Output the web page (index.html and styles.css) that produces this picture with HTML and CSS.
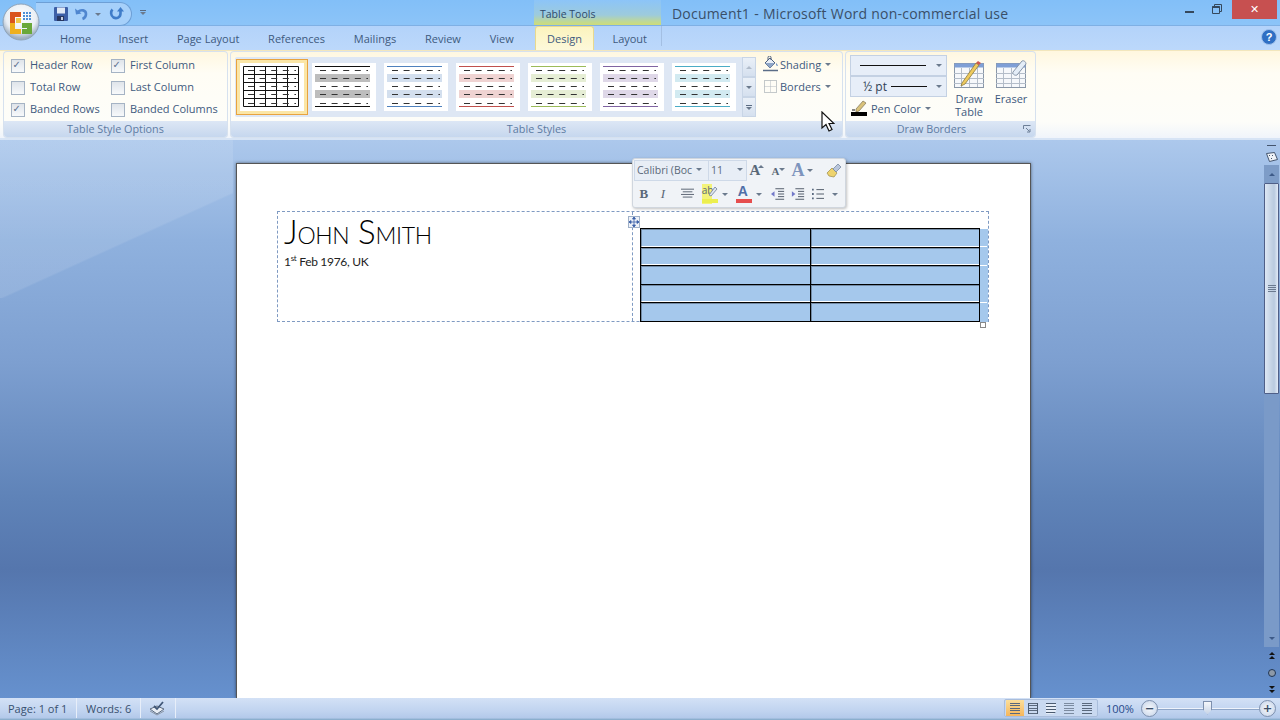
FILE: index.html
```html
<!DOCTYPE html>
<html lang="en">

<head>
    <meta charset="UTF-8">
    <title>Document1 - Microsoft Word non-commercial use</title>
    <link rel="stylesheet" href="styles.css">
</head>

<body>
    <svg class="defs" width="0" height="0">
        <symbol id="dashes" viewBox="0 0 64 48">
            <path d="M8 7.500h48M8 15.500h48M8 23.500h48M8 31.500h48M8 40.500h48" stroke="#333" stroke-width="1" stroke-dasharray="6 5.600" fill="none" />
        </symbol>
        <symbol id="banded" viewBox="0 0 64 48">
            <rect x="3" y="11" width="55" height="8" fill="var(--band)" />
            <rect x="3" y="27" width="55" height="8" fill="var(--band)" />
            <path d="M3 3.500h55M3 43.500h55" stroke="currentColor" stroke-width="1" fill="none" />
        </symbol>
        <symbol id="grid-table" viewBox="0 0 32 30">
            <rect x="1.500" y="4.500" width="29" height="24" fill="#f6f8fb" stroke="#8a97a8" />
            <rect x="1.500" y="4.500" width="29" height="4" fill="#7f9fd6" />
            <path d="M1 14.500h30M1 19.500h30M1 24.500h30M8.500 9v19M16.500 9v19M24.500 9v19" stroke="#b4bdc9" fill="none" />
        </symbol>
    </svg>

    <div class="titlebar">
        <div class="qat">
            <svg class="save-icon" width="16" height="16" viewBox="0 0 16 16">
                <rect x="1" y="1" width="14" height="14" rx="1" fill="#3c5fa6" />
                <rect x="4" y="1.500" width="8" height="6" fill="#dfe8f5" />
                <rect x="4" y="10" width="7" height="5" fill="#27365f" />
                <rect x="8" y="11" width="2" height="3" fill="#c6d0e2" />
            </svg>
            <svg width="16" height="14" viewBox="0 0 16 14">
                <path d="M4 5c3-3 8-2 8 2 0 2-1 4-3.500 5" stroke="#4f86cf" stroke-width="2.600" fill="none" />
                <path d="M1 1.500l1 6 5.500-1z" fill="#4f86cf" />
            </svg>
            <span class="caret qat-caret"></span>
            <svg class="redo-icon" width="15" height="14" viewBox="0 0 15 14">
                <path d="M3.500 2.500c-2 2-2 6 1 8 3 1.500 7 0 7-4v-3" stroke="#3f7cc9" stroke-width="2.600" fill="none" />
                <path d="M8 4.500h7L11.500 0z" fill="#3f7cc9" />
            </svg>
        </div>
        <div class="qat-more"><span class="more-line"></span><span class="caret"></span></div>
        <div class="context-label">Table Tools</div>
        <div class="doc-title">Document1 - Microsoft Word non-commercial use</div>
        <div class="window-buttons">
            <span class="win-min"></span>
            <svg class="win-restore" width="10" height="10" viewBox="0 0 10 10">
                <path d="M2.500 2.500v-2h7v7h-2M.5 2.500h7v7h-7z" stroke="#35485c" fill="none" />
                <path d="M.5 3h7" stroke="#35485c" stroke-width="2" />
            </svg>
            <div class="win-close">&#10005;</div>
        </div>
    </div>

    <svg class="office-button" width="38" height="38" viewBox="0 0 38 38">
        <defs>
            <radialGradient id="orb" cx="50%" cy="35%" r="60%">
                <stop offset="0" stop-color="#fff" />
                <stop offset="0.7" stop-color="#e9eef4" />
                <stop offset="1" stop-color="#9fb0c2" />
            </radialGradient>
        </defs>
        <circle cx="19" cy="19" r="18" fill="url(#orb)" stroke="#8fa3b8" />
        <path d="M8 9h11v5h-6v6H8z" fill="#d9541e" />
        <path d="M8 20h5v6h6v5H8z" fill="#eeb01e" />
        <path d="M20 20h10v11H20v-5h5v-1h-5z" fill="#6aa83a" />
        <rect x="14" y="15" width="5" height="5" fill="#f0c84a" />
        <path d="M21 9h2v2h-2zM24 9h2v2h-2zM27 9h2v2h-2zM21 12h2v2h-2zM24 12h2v2h-2zM27 12h2v2h-2zM21 15h2v2h-2zM24 15h2v2h-2zM27 15h2v2h-2z" fill="#4d8fd6" />
    </svg>

    <div class="tabs">
        <div class="tab first">Home</div>
        <div class="tab">Insert</div>
        <div class="tab">Page Layout</div>
        <div class="tab">References</div>
        <div class="tab">Mailings</div>
        <div class="tab">Review</div>
        <div class="tab">View</div>
        <div class="tab active">Design</div>
        <div class="tab context-last">Layout</div>
        <svg class="help-icon" width="16" height="16" viewBox="0 0 16 16">
            <circle cx="8" cy="8" r="7.500" fill="#2f6fc4" stroke="#9fc0ea" />
            <text x="8" y="12" text-anchor="middle" class="help-mark">?</text>
        </svg>
    </div>

    <div class="ribbon">
        <div class="group options-group">
            <div class="group-body checks">
                <label class="check on">Header Row</label>
                <label class="check on">First Column</label>
                <label class="check">Total Row</label>
                <label class="check">Last Column</label>
                <label class="check on">Banded Rows</label>
                <label class="check">Banded Columns</label>
            </div>
            <div class="group-label">Table Style Options</div>
        </div>

        <div class="group styles-group">
            <div class="group-body styles-body">
                <div class="gallery">
                    <div class="thumb selected">
                        <svg width="64" height="48" viewBox="0 0 64 48">
                            <path d="M3.500 3.500h55v40h-55zM3.500 11.500h55M3.500 19.500h55M3.500 27.500h55M3.500 35.500h55M14.500 3.500v40M25.500 3.500v40M36.500 3.500v40M47.500 3.500v40" stroke="#111" fill="none" />
                            <use href="#dashes" />
                        </svg>
                    </div>
                    <div class="thumb black"><svg width="64" height="48"><use href="#banded" /><use href="#dashes" /></svg></div>
                    <div class="thumb blue"><svg width="64" height="48"><use href="#banded" /><use href="#dashes" /></svg></div>
                    <div class="thumb red"><svg width="64" height="48"><use href="#banded" /><use href="#dashes" /></svg></div>
                    <div class="thumb green"><svg width="64" height="48"><use href="#banded" /><use href="#dashes" /></svg></div>
                    <div class="thumb purple"><svg width="64" height="48"><use href="#banded" /><use href="#dashes" /></svg></div>
                    <div class="thumb teal"><svg width="64" height="48"><use href="#banded" /><use href="#dashes" /></svg></div>
                    <div class="gallery-scroll">
                        <div class="scroll-btn"><span class="caret up faded"></span></div>
                        <div class="scroll-btn"><span class="caret"></span></div>
                        <div class="scroll-btn"><span class="more-line"></span><span class="caret"></span></div>
                    </div>
                </div>
                <div class="style-actions">
                    <div class="menu-btn">
                        <svg width="18" height="16" viewBox="0 0 18 16">
                            <path d="M3 7l5-5 5 5-5 5z" fill="#e8eef7" stroke="#4c5f7c" />
                            <path d="M6 4V1.500a1.500 1.500 0 0 1 3 0V4" stroke="#4c5f7c" fill="none" />
                            <path d="M3 7h10l-5 5z" fill="#8fa6c8" />
                            <path d="M14 7c1 1 2 2 1.500 3-1 .5-1.500-2-1.500-3z" fill="#4a78b8" />
                            <path d="M1 14.500h15" stroke="#5b6d88" stroke-width="1.500" />
                        </svg>
                        <span>Shading</span><span class="caret"></span>
                    </div>
                    <div class="menu-btn">
                        <svg width="18" height="16" viewBox="0 0 18 16">
                            <rect x="2.500" y="2.500" width="12" height="12" fill="none" stroke="#8b949f" stroke-dasharray="1 1" />
                            <path d="M8.500 2.500v12M2.500 8.500h12" stroke="#b2b8c0" stroke-dasharray="1 1" />
                        </svg>
                        <span>Borders</span><span class="caret"></span>
                    </div>
                </div>
            </div>
            <div class="group-label">Table Styles</div>
        </div>

        <div class="group borders-group">
            <div class="group-body borders-body">
                <div class="pen-settings">
                    <div class="combo"><span class="pen-line long"></span><span class="caret"></span></div>
                    <div class="combo"><span class="pen-size">&frac12; pt</span><span class="pen-line"></span><span class="caret"></span></div>
                    <div class="menu-btn pen-color">
                        <svg width="18" height="16" viewBox="0 0 18 16">
                            <path d="M5 9l7-8 3 2-7 8-3 1z" fill="#d9c27a" stroke="#7c7357" stroke-width=".7" />
                            <path d="M1 10h3" stroke="#111" />
                            <rect x="0" y="12" width="16" height="4" fill="#000" />
                        </svg>
                        <span>Pen Color</span><span class="caret"></span>
                    </div>
                </div>
                <div class="large-btn draw-btn">
                    <svg width="32" height="30" viewBox="0 0 32 30">
                        <use href="#grid-table" />
                        <path d="M9 24L23 4l3 2-14 19-4 2z" fill="#eeca5e" stroke="#8c7a3c" stroke-width=".8" />
                        <path d="M23 4l2-2 3 2-2 2z" fill="#d0574c" />
                    </svg>
                    <span>Draw<br>Table</span>
                </div>
                <div class="large-btn eraser-btn">
                    <svg width="32" height="30" viewBox="0 0 32 30">
                        <use href="#grid-table" />
                        <path d="M18 13l9-11c2-1 4 1 4 3l-9 11c-2 1-5-1-4-3z" fill="#e4edf7" stroke="#8795a8" />
                    </svg>
                    <span>Eraser</span>
                </div>
            </div>
            <div class="group-label borders-label">Draw Borders
                <svg class="launcher" width="8" height="8" viewBox="0 0 8 8">
                    <path d="M.5 4V.5H7.500M3 3l3.500 3.500M4 7h3V4" stroke="#6d7f97" fill="none" />
                </svg>
            </div>
        </div>
    </div>

    <div class="main">
        <div class="page">
            <div class="layout-table">
                <div class="bio-cell">
                    <div class="name">John Smith</div>
                    <div class="born">1<sup>st</sup> Feb 1976, UK</div>
                </div>
                <div class="table-cell">
                    <table class="selected-table">
                        <tr class="gap"><td></td><td></td><td class="row-end"></td></tr>
                        <tr class="gap"><td></td><td></td><td class="row-end"></td></tr>
                        <tr><td></td><td></td><td class="row-end"></td></tr>
                        <tr class="gap"><td></td><td></td><td class="row-end"></td></tr>
                        <tr><td></td><td></td><td class="row-end"></td></tr>
                    </table>
                </div>
                <div class="move-handle">
                    <svg width="10" height="10" viewBox="0 0 10 10">
                        <path d="M5 0v10M0 5h10M5 0L3.500 2h3zM5 10L3.500 8h3zM0 5l2-1.500v3zM10 5L8 3.500v3z" stroke="#3a5fa8" fill="#3a5fa8" stroke-width=".8" />
                    </svg>
                </div>
                <div class="resize-handle"></div>
            </div>
        </div>

        <div class="scrollbar">
            <span class="split-bar"></span>
            <svg class="ruler-toggle" width="12" height="10" viewBox="0 0 12 10">
                <path d="M.5 1.500l8-1 3 7-8 2z" fill="#eef2f7" stroke="#44556e" />
                <path d="M3 3l1 1M6 3l1 1M5 6l1 1" stroke="#44556e" />
            </svg>
            <div class="scroll-up"><span class="caret up dark"></span></div>
            <div class="scroll-thumb"><span class="grip"></span></div>
            <div class="scroll-track"></div>
            <div class="scroll-arrow"><span class="caret dark"></span></div>
            <div class="browse"><span class="caret up black-caret"></span><span class="caret up black-caret"></span></div>
            <div class="browse"><span class="browse-dot"></span></div>
            <div class="browse"><span class="caret black-caret"></span><span class="caret black-caret"></span></div>
        </div>
    </div>

    <div class="statusbar">
        <div class="status-item page-count">Page: 1 of 1</div>
        <div class="status-item word-count">Words: 6</div>
        <div class="status-item proof">
            <svg width="17" height="15" viewBox="0 0 17 15">
                <path d="M1 8l7-3 7 3-7 5z" fill="#e8edf4" stroke="#5f6d80" />
                <path d="M1 10l7 4 7-4" fill="none" stroke="#8b96a6" />
                <path d="M5 5l3 3 6-7" fill="none" stroke="#3f5676" stroke-width="1.800" />
            </svg>
        </div>
        <div class="status-right">
            <div class="view-buttons">
                <div class="view-btn active"><span class="view-lines"></span></div>
                <div class="view-btn"><span class="view-lines book"></span></div>
                <div class="view-btn"><span class="view-lines web"></span></div>
                <div class="view-btn"><span class="view-lines outline"></span></div>
                <div class="view-btn"><span class="view-lines"></span></div>
            </div>
            <div class="zoom-level">100%</div>
            <div class="zoom-btn">&minus;</div>
            <div class="zoom-slider"><span class="zoom-thumb"></span></div>
            <div class="zoom-btn">+</div>
        </div>
    </div>

    <div class="mini-toolbar">
        <div class="mini-row">
            <div class="mini-combo font-combo"><span class="font-name">Calibri (Boc</span><span class="caret"></span></div>
            <div class="mini-combo size-combo"><span>11</span><span class="caret"></span></div>
            <div class="mini-btn grow">A<span class="caret up"></span></div>
            <div class="mini-btn shrink">A<span class="caret"></span></div>
            <div class="mini-btn styles-a">A<span class="caret"></span></div>
            <svg class="brush-icon" width="16" height="16" viewBox="0 0 16 16">
                <path d="M1 10l5-5 5 5-3 4-5-1z" fill="#eed36d" stroke="#9a8a4a" stroke-width=".7" />
                <path d="M7 6l5-5 3 3-5 5z" fill="#b9c6dc" stroke="#6f7f9b" stroke-width=".7" />
            </svg>
        </div>
        <div class="mini-row second">
            <div class="mini-btn bold">B</div>
            <div class="mini-btn italic">I</div>
            <svg class="align-icon" width="15" height="12" viewBox="0 0 15 12">
                <path d="M0 .5h15M2 3.500h11M0 6.500h15M2 9.500h11" stroke="#4a5565" />
            </svg>
            <div class="mini-btn highlight">ab
                <svg class="highlight-pen" width="10" height="12" viewBox="0 0 10 12">
                    <path d="M1 10l6-8 2 2-6 7z" fill="#dfe6f0" stroke="#6f7f9b" stroke-width=".8" />
                </svg>
                <span class="color-bar yellow"></span>
            </div>
            <span class="caret"></span>
            <div class="mini-btn font-color">A<span class="color-bar red-bar"></span></div>
            <span class="caret"></span>
            <svg class="outdent-icon" width="16" height="14" viewBox="0 0 16 14">
                <path d="M5 1h10M8 4h7M8 7h7M8 10h7M5 13h10" stroke="#3f4a5a" />
                <path d="M0 7l4-3v6z" fill="#7279c9" />
            </svg>
            <svg class="indent-icon" width="16" height="14" viewBox="0 0 16 14">
                <path d="M5 1h10M8 4h7M8 7h7M8 10h7M5 13h10" stroke="#3f4a5a" />
                <path d="M5 7L1 4v6z" fill="#7279c9" />
            </svg>
            <svg class="list-icon" width="14" height="14" viewBox="0 0 14 14">
                <path d="M5 2h9M5 7h9M5 12h9" stroke="#3f4a5a" />
                <path d="M0 1h2v2H0zM0 6h2v2H0zM0 11h2v2H0z" fill="#5a6a80" />
            </svg>
            <span class="caret list-caret"></span>
        </div>
    </div>

    <svg class="mouse-cursor" width="14" height="22" viewBox="0 0 14 22">
        <path d="M1 1v16l4-3.500 3 6.500 3-1.500-3-6h5z" fill="#fff" stroke="#111" stroke-width="1.200" />
    </svg>
</body>

</html>
```

FILE: styles.css
```css
* {
    box-sizing: border-box;
}

body {
    margin: 0;
    width: 1280px;
    height: 720px;
    overflow: hidden;
    position: relative;
    display: flex;
    flex-direction: column;
    font-family: "Open Sans", "Liberation Sans", sans-serif;
    font-size: 11px;
    color: #3e5a7e;
    background-color: #85c0f8;
}

.defs {
    position: absolute;
}

.caret {
    display: inline-block;
    width: 0;
    height: 0;
    border-left: 3px solid transparent;
    border-right: 3px solid transparent;
    border-top: 3px solid #6b7a8d;
}

.caret.up {
    border-top: none;
    border-bottom: 3px solid #6b7a8d;
}

.caret.faded {
    opacity: 0.4;
}

.caret.dark {
    border-top-color: #3d5a88;
    border-bottom-color: #3d5a88;
}

.caret.black-caret {
    border-top-color: #111;
    border-bottom-color: #111;
}

.more-line {
    display: block;
    width: 6px;
    height: 1px;
    background-color: #5a6b82;
    margin-bottom: 1px;
}

/* title bar */
.titlebar {
    height: 26px;
    display: flex;
    align-items: flex-start;
    background: linear-gradient(#82bff8, #8cc4f8);
    border-bottom: 1px solid #7fb0e4;
}

.qat {
    width: 96px;
    height: 24px;
    margin: 2px 0 0 36px;
    padding-left: 17px;
    display: flex;
    align-items: center;
    gap: 5px;
    border: 1px solid #6d9fd6;
    border-left: none;
    border-radius: 0 12px 12px 0;
    background-color: #a6d0fa;
}

.redo-icon {
    margin-left: 3px;
}

.qat-more {
    margin: 10px 0 0 8px;
    display: flex;
    flex-direction: column;
}

.context-label {
    width: 127px;
    height: 25px;
    margin-left: 388px;
    padding: 7px 0 0 6px;
    font-size: 10.500px;
    color: #2f4a6b;
    background: linear-gradient(#8cc4f8 0%, #9dcbdc 60%, #c4da8c 90%, #cfdc78 100%);
}

.doc-title {
    margin: 4px 0 0 11px;
    font-size: 14px;
    letter-spacing: 0.200px;
    word-spacing: 0.300px;
    color: #3a4f68;
    white-space: pre;
}

.window-buttons {
    margin-left: auto;
    display: flex;
    align-items: flex-start;
}

.win-min {
    width: 9px;
    height: 2px;
    margin: 11px 18px 0 0;
    background-color: #35485c;
}

.win-restore {
    margin: 4px 10px 0 0;
}

.win-close {
    width: 45px;
    height: 19px;
    margin-right: 3px;
    text-align: center;
    font-size: 11px;
    line-height: 18px;
    color: #fff;
    background-color: #c75050;
}

.office-button {
    position: absolute;
    left: 2px;
    top: 3px;
}

/* tabs */
.tabs {
    height: 24px;
    padding-left: 46px;
    display: flex;
    align-items: stretch;
    background: linear-gradient(#b3d3fa, #bcd8fb);
}

.tab {
    padding: 0 14.400px;
    font-size: 11px;
    line-height: 25px;
    white-space: nowrap;
}

.tab.first {
    padding: 0 13px 0 14px;
}

.tab.active {
    height: 25px;
    padding: 0 11px;
    margin: 0 4px 0 7px;
    border: 1px solid #e8d98f;
    border-bottom: none;
    border-radius: 3px 3px 0 0;
    line-height: 23px;
    background: linear-gradient(#fbf3bd, #fdf9dc);
}

.context-last {
    padding-right: 14px;
    border-right: 1px solid #a3bfe3;
    margin-bottom: 4px;
}

.help-icon {
    margin: 3px 3px 0 auto;
}

.help-mark {
    font-family: "Liberation Sans", sans-serif;
    font-size: 11px;
    font-weight: 700;
    fill: #fff;
}

/* ribbon */
.ribbon {
    height: 90px;
    padding: 1px 2px 3px 4px;
    display: flex;
    gap: 4px;
    position: relative;
    background: linear-gradient(#fff7df, #fffdf5 25%, #fdfdf9 80%, #eef3fb);
    border-top: 1px solid #f2e6bd;
    box-shadow: inset 0 -2px 0 #d7e4f5;
}

.group {
    display: flex;
    flex-direction: column;
    border-radius: 3px;
    box-shadow: 0 0 0 1px #d6e1ef;
}

.group-body {
    flex: 1;
}

.group-label {
    height: 16px;
    position: relative;
    text-align: center;
    font-size: 10.800px;
    line-height: 16px;
    color: #5d7ba3;
    background: linear-gradient(#dde7f5, #c6d7ee);
    border-radius: 0 0 3px 3px;
}

.borders-label {
    padding-right: 18px;
}

.launcher {
    position: absolute;
    right: 4px;
    top: 4px;
}

.options-group {
    width: 223px;
}

.checks {
    display: grid;
    grid-template-columns: 100px 1fr;
    grid-auto-rows: 22px;
    padding: 2px 0 0 7px;
}

.check {
    position: relative;
    padding-left: 19px;
    line-height: 22px;
    white-space: nowrap;
}

.check::before {
    content: "";
    position: absolute;
    left: 0;
    top: 5px;
    width: 12px;
    height: 12px;
    border: 1px solid #a5b3c4;
    background: linear-gradient(#dfe4ea, #f7f9fb);
}

.check.on::after {
    content: "\2713";
    position: absolute;
    left: 1.500px;
    top: 0;
    font-family: "DejaVu Sans", sans-serif;
    font-size: 10px;
    font-weight: 700;
    color: #5d7190;
}

.styles-group {
    width: 611px;
}

.styles-body {
    display: flex;
    padding: 5px 0 0 4px;
}

.gallery {
    width: 521px;
    height: 60px;
    padding: 6px 0 0 5px;
    display: flex;
    gap: 8px;
    background-color: #dee7f4;
    border-radius: 2px;
}

.thumb {
    width: 64px;
    height: 48px;
    background-color: #fff;
}

.thumb svg {
    display: block;
}

.thumb.selected {
    box-shadow: 0 0 0 3px #fbe6a6, 0 0 0 4px #e8a33f;
}

.black {
    color: #111;
    --band: #bdbdbd;
}

.blue {
    color: #4f81bd;
    --band: #d3dfee;
}

.red {
    color: #c0504d;
    --band: #efd3d2;
}

.green {
    color: #9bbb59;
    --band: #e6eed5;
}

.purple {
    color: #8064a2;
    --band: #dfd8e8;
}

.teal {
    color: #4bacc6;
    --band: #d2eaf1;
}

.gallery-scroll {
    width: 14px;
    margin: -6px 0 0 -2px;
    display: flex;
    flex-direction: column;
}

.scroll-btn {
    height: 20px;
    display: flex;
    flex-direction: column;
    align-items: center;
    justify-content: center;
    background: linear-gradient(#eaf0f8, #d5e0ef);
    border: 1px solid #c8d5e6;
}

.style-actions {
    margin: -4px 0 0 6px;
    display: flex;
    flex-direction: column;
}

.menu-btn {
    height: 22px;
    display: flex;
    align-items: center;
    white-space: nowrap;
}

.menu-btn .caret {
    margin-left: 4px;
}

.borders-group {
    width: 189px;
}

.borders-body {
    display: flex;
    padding: 3px 0 0 4px;
}

.pen-settings {
    width: 97px;
}

.combo {
    height: 21px;
    padding: 0 4px 0 9px;
    display: flex;
    align-items: center;
    gap: 4px;
    color: #2f3f55;
    background-color: #e7eef8;
    border: 1px solid #c4d1e3;
}

.combo .caret {
    margin-left: auto;
}

.pen-size {
    margin-left: 3px;
    font-size: 12px;
}

.pen-line {
    width: 36px;
    height: 1px;
    background-color: #111;
}

.pen-line.long {
    width: 66px;
}

.pen-color {
    padding-left: 1px;
    gap: 2px;
}

.pen-color .caret {
    margin-left: 2px;
}

.large-btn {
    display: flex;
    flex-direction: column;
    align-items: center;
    line-height: 13px;
    text-align: center;
    padding-top: 4px;
}

.large-btn svg {
    margin-bottom: 3px;
}

.draw-btn {
    margin-left: 6px;
    width: 32px;
}

.eraser-btn {
    margin-left: 9px;
    width: 34px;
}

/* document area */
.main {
    height: 558px;
    display: flex;
    overflow: hidden;
    background:
        linear-gradient(to bottom right, rgba(255, 255, 255, 0.1) 50%, transparent 51%) 0 52px / 233px 106px no-repeat,
        linear-gradient(rgba(255, 255, 255, 0.1), rgba(255, 255, 255, 0.1)) 0 0 / 233px 52px no-repeat,
        linear-gradient(#acc8ec 0%, #8fb1de 18%, #7d9fd0 40%, #5f83b8 64%, #5576ad 77%, #6691ce 100%);
}

.page {
    width: 795px;
    height: 535px;
    margin: 23px 0 0 236px;
    padding: 47px 0 0 40px;
    background-color: #fff;
    border: 1px solid #555;
    border-bottom: none;
    box-shadow: 0 0 3px rgba(0, 0, 0, 0.5);
}

.layout-table {
    width: 712px;
    height: 111px;
    position: relative;
    display: flex;
    border: 1px dashed #7f9ac2;
}

.bio-cell {
    width: 357px;
    padding: 0 0 0 6px;
    border-right: 1px dashed #7f9ac2;
    color: #000;
}

.name {
    font-family: Lato, "Noto Sans", sans-serif;
    font-variant: small-caps;
    font-weight: 300;
    font-size: 33px;
    line-height: 38px;
    letter-spacing: -0.300px;
}

.born {
    margin-top: 4px;
    font-family: Lato, "Noto Sans", sans-serif;
    font-size: 12px;
    line-height: 16px;
    letter-spacing: -0.300px;
    color: #222;
}

.born sup {
    font-size: 8px;
    line-height: 0;
}

.table-cell {
    padding: 16px 0 0 7px;
}

.selected-table {
    width: 348px;
    height: 94px;
    border-collapse: collapse;
    table-layout: fixed;
}

.selected-table td {
    padding: 0;
    background-color: #a5c8ec;
    border: 1px solid #000;
    box-shadow: inset 1px 1px 0 rgba(0, 0, 0, 0.3);
}

.selected-table .row-end {
    width: 8px;
    border: none;
    box-shadow: none;
}

.gap td {
    box-shadow: inset 1px 1px 0 rgba(0, 0, 0, 0.3), inset 0 -1px 0 #fff;
}

.gap .row-end {
    box-shadow: inset 0 -1px 0 #fff;
}

.move-handle {
    position: absolute;
    left: 350px;
    top: 4px;
    width: 12px;
    height: 12px;
    padding: 0;
    display: flex;
    align-items: center;
    justify-content: center;
    background-color: #eef2f8;
    border: 1px solid #9fb0c8;
}

.resize-handle {
    position: absolute;
    left: 702px;
    top: 110px;
    width: 6px;
    height: 6px;
    background-color: #fff;
    border: 1px solid #888;
}

.scrollbar {
    width: 15px;
    margin-left: 233px;
    margin-right: 1px;
    display: flex;
    flex-direction: column;
    align-items: center;
}

.split-bar {
    width: 9px;
    height: 1px;
    margin-top: 5px;
    background-color: #44556e;
    flex-shrink: 0;
}

.ruler-toggle {
    margin-top: 6px;
    flex-shrink: 0;
}

.scroll-up {
    width: 15px;
    height: 18px;
    margin-top: 3px;
    display: flex;
    align-items: center;
    justify-content: center;
    flex-shrink: 0;
    background-color: #7d9cc7;
}

.scroll-thumb {
    width: 15px;
    height: 211px;
    display: flex;
    align-items: center;
    justify-content: center;
    flex-shrink: 0;
    background: linear-gradient(90deg, #dde7f4, #c3d2e4 50%, #b9cadf 70%, #e1eaf6);
    border: 1px solid #4f5f88;
    border-radius: 1px;
}

.grip {
    width: 8px;
    height: 7px;
    background: repeating-linear-gradient(#6b7a90 0 1px, transparent 1px 2px);
}

.scroll-track {
    flex: 1;
    width: 15px;
    background-color: #7a9ac8;
}

.scroll-arrow {
    height: 18px;
    width: 15px;
    display: flex;
    align-items: center;
    justify-content: center;
    flex-shrink: 0;
    background-color: #7a9ac8;
}

.browse {
    height: 17px;
    display: flex;
    flex-direction: column;
    align-items: center;
    justify-content: center;
    flex-shrink: 0;
    gap: 1px;
}

.browse-dot {
    width: 8px;
    height: 8px;
    background-color: #8d99a8;
    border: 1px solid #1f3555;
    border-radius: 50%;
}

/* status bar */
.statusbar {
    height: 22px;
    display: flex;
    align-items: stretch;
    font-size: 11px;
    color: #38506f;
    background: linear-gradient(#d3e1f6, #c0d3ef 60%, #b3c9ea 90%, #7fa6c4 100%);
}

.status-item {
    display: flex;
    align-items: center;
    margin-bottom: 2px;
    border-right: 1px solid #e7eef9;
}

.page-count {
    width: 77px;
    padding-left: 8px;
}

.word-count {
    width: 64px;
    padding-left: 9px;
}

.proof {
    width: 35px;
    padding-left: 8px;
}

.status-right {
    margin-left: auto;
    margin-right: 4px;
    display: flex;
    align-items: center;
    padding-bottom: 2px;
}

.view-buttons {
    display: flex;
    height: 18px;
    margin-right: 9px;
    padding: 0 1px;
    background-color: #c9d9f0;
    border: 1px solid #a9bddb;
    border-radius: 2px;
}

.view-btn {
    width: 18px;
    display: flex;
    align-items: center;
    justify-content: center;
}

.view-btn.active {
    background: linear-gradient(#fbdf9b, #f6b65a);
}

.view-lines {
    width: 10px;
    height: 11px;
    background: repeating-linear-gradient(#5a697d 0 1px, transparent 1px 2.500px);
}

.view-lines.book {
    border-left: 1px solid #4b5b70;
    border-right: 1px solid #4b5b70;
}

.view-lines.web {
    background: repeating-linear-gradient(#4b5b70 0 1px, #e7eef8 1px 3px);
    border-radius: 0 0 4px 0;
}

.view-lines.outline {
    opacity: 0.7;
}

.zoom-level {
    width: 35px;
    margin-left: -1px;
    color: #26498a;
    font-size: 11px;
}

.zoom-btn {
    width: 17px;
    height: 17px;
    text-align: center;
    font-size: 15px;
    font-weight: 600;
    line-height: 14px;
    color: #3c4e68;
    background: radial-gradient(#f4f7fb, #c5d3e8);
    border: 1px solid #7d90ae;
    border-radius: 50%;
}

.zoom-slider {
    width: 101px;
    height: 1px;
    position: relative;
    background-color: #eef3fb;
    box-shadow: 0 1px 0 #8ea6c8;
}

.zoom-thumb {
    position: absolute;
    left: 45px;
    top: -7px;
    width: 9px;
    height: 14px;
    background: linear-gradient(#f4f7fb, #c7d4e7);
    border: 1px solid #7d90ae;
    clip-path: polygon(0 0, 100% 0, 100% 65%, 50% 100%, 0 65%);
}

/* floating format bar */
.mini-toolbar {
    position: absolute;
    left: 632px;
    top: 158px;
    width: 214px;
    height: 50px;
    padding: 1px 0 0 1px;
    color: #5a6878;
    background-color: #f0f3f7;
    border: 1px solid #d0d6de;
    border-radius: 3px;
    box-shadow: 1px 1px 3px rgba(0, 0, 0, 0.25);
}

.mini-row {
    height: 21px;
    display: flex;
    align-items: center;
}

.mini-row.second {
    height: 26px;
    padding-left: 1px;
}

.mini-combo {
    height: 21px;
    padding: 0 6px 2px 2px;
    display: flex;
    align-items: center;
    justify-content: space-between;
    font-size: 10.500px;
    background-color: #e8eef6;
    border: 1px solid #ced9e8;
}

.font-combo {
    width: 75px;
}

.font-name {
    width: 56px;
    overflow: hidden;
    white-space: nowrap;
}

.size-combo {
    width: 39px;
    margin-left: -1px;
    padding-right: 3px;
}

.mini-btn {
    position: relative;
    font-family: "Liberation Serif", serif;
    display: flex;
    align-items: center;
    justify-content: center;
}

.grow {
    width: 20px;
    margin-left: -2px;
    font-size: 15px;
    font-weight: 700;
}

.shrink {
    width: 21px;
    font-size: 11px;
    font-weight: 700;
}

.grow .caret,
.shrink .caret {
    position: absolute;
    right: 1px;
    top: 3px;
}

.styles-a {
    width: 30px;
    margin-left: 1px;
    font-size: 18px;
    font-weight: 700;
    color: #7d94bd;
}

.styles-a .caret {
    margin-left: 2px;
}

.brush-icon {
    margin-left: 9px;
}

.bold {
    width: 20px;
    font-size: 13px;
    font-weight: 700;
}

.italic {
    width: 24px;
    font-size: 13px;
    font-style: italic;
}

.align-icon {
    margin: 0 8px 0 7px;
}

.highlight {
    width: 16px;
    height: 20px;
    align-items: flex-start;
    justify-content: flex-start;
    font-family: "Open Sans", sans-serif;
    font-size: 10px;
    line-height: 13px;
    background: linear-gradient(90deg, #f3f37a 0 10px, transparent 10px);
}

.highlight-pen {
    position: absolute;
    right: -2px;
    top: 1px;
}

.font-color {
    width: 16px;
    height: 20px;
    margin-left: 1px;
    align-items: flex-start;
    font-family: "Liberation Sans", sans-serif;
    font-size: 14px;
    font-weight: 700;
    line-height: 15px;
    color: #4f6fa8;
}

.color-bar {
    position: absolute;
    left: 0;
    bottom: 1px;
    width: 16px;
    height: 4px;
}

.yellow {
    background-color: #ecef4f;
}

.red-bar {
    background-color: #e64e4e;
}

.mini-row.second .caret {
    margin: 0 7px 0 6px;
}

.mini-row.second .list-caret {
    margin-left: 8px;
}

.outdent-icon {
    margin-left: 2px;
}

.indent-icon {
    margin-left: 6px;
}

.list-icon {
    margin-left: 7px;
}

.mouse-cursor {
    position: absolute;
    left: 821px;
    top: 111px;
}
```
